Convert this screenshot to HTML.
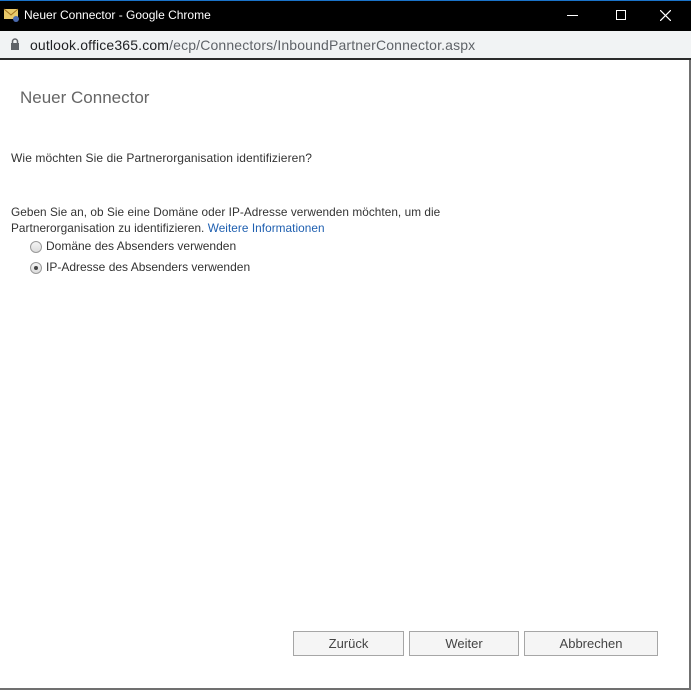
<!DOCTYPE html>
<html><head><meta charset="utf-8"><style>
*{margin:0;padding:0;box-sizing:border-box}
body{width:691px;height:690px;position:relative;background:#fff;font-family:"Liberation Sans",sans-serif;overflow:hidden}
.t{position:absolute;white-space:nowrap}
.btn{position:absolute;top:631px;height:25px;border:1px solid #a6a6a6;background:#f5f5f5;font-size:13px;color:#444;text-align:center;line-height:23px}
.r{position:absolute;left:30px;width:12px;height:12px;border-radius:50%;border:1px solid #999;background:linear-gradient(#f4f4f4,#dcdcdc)}
</style></head><body>
<div style="position:absolute;left:0;top:0;width:691px;height:1px;background:#1a73c9"></div>
<div style="position:absolute;left:0;top:1px;width:691px;height:30px;background:#000"></div>
<svg class="t" style="left:3px;top:7px" width="18" height="16"><rect x="1" y="2" width="14" height="10" fill="#e8c96a"/><path d="M1 2L8 8L15 2" stroke="#a07020" fill="none"/><circle cx="13" cy="12" r="3" fill="#4a6ab0"/></svg>
<div class="t" style="left:24px;top:8px;color:#fff;font-size:12px">Neuer Connector - Google Chrome</div>
<div class="t" style="left:567px;top:15px;width:11px;height:1px;background:#fff"></div>
<div class="t" style="left:616px;top:10px;width:10px;height:10px;border:1px solid #fff"></div>
<svg class="t" style="left:660px;top:10px" width="11" height="11"><path d="M0 0L11 11M11 0L0 11" stroke="#fff" stroke-width="1.2"/></svg>
<div style="position:absolute;left:0;top:31px;width:691px;height:27px;background:#f1f3f4"></div>
<svg class="t" style="left:10px;top:38px" width="10" height="12"><rect x="1" y="5" width="8" height="7" fill="#5f6368"/><path d="M2.5 5V3.5a2.5 2.5 0 0 1 5 0V5" stroke="#5f6368" fill="none" stroke-width="1.5"/></svg>
<div class="t" style="left:30px;top:37px;font-size:14px;letter-spacing:0.15px;color:#202124">outlook.office365.com<span style="color:#5f6368">/ecp/Connectors/InboundPartnerConnector.aspx</span></div>
<div style="position:absolute;left:0;top:58px;width:691px;height:2px;background:#2b2b2b"></div>
<div style="position:absolute;left:689px;top:60px;width:2px;height:630px;background:#707070"></div>
<div style="position:absolute;left:0;top:688px;width:691px;height:2px;background:#707070"></div>
<div class="t" style="left:20px;top:88px;font-size:17px;color:#666">Neuer Connector</div>
<div class="t" style="left:11px;top:151px;font-size:12px;letter-spacing:0.1px;color:#333">Wie möchten Sie die Partnerorganisation identifizieren?</div>
<div class="t" style="left:11px;top:204px;font-size:11.8px;letter-spacing:0.05px;color:#333;line-height:16px">Geben Sie an, ob Sie eine Domäne oder IP-Adresse verwenden möchten, um die<br>Partnerorganisation zu identifizieren. <span style="color:#1e5fb0">Weitere Informationen</span></div>
<div class="r" style="top:241px"></div>
<div class="t" style="left:46px;top:239px;font-size:12px;color:#333">Domäne des Absenders verwenden</div>
<div class="r" style="top:262px"><div style="position:absolute;left:3px;top:3px;width:4px;height:4px;border-radius:50%;background:#444"></div></div>
<div class="t" style="left:46px;top:260px;font-size:12px;color:#333">IP-Adresse des Absenders verwenden</div>
<div class="btn" style="left:293px;width:111px">Zurück</div>
<div class="btn" style="left:409px;width:110px">Weiter</div>
<div class="btn" style="left:524px;width:134px">Abbrechen</div>
</body></html>
